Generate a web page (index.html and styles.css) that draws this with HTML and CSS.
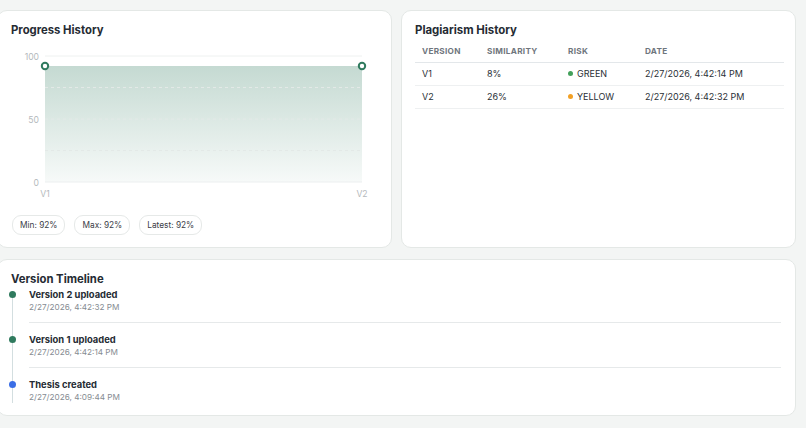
FILE: index.html
```html
<!DOCTYPE html>
<html lang="en">
<head>
<meta charset="utf-8">
<title>Thesis Dashboard</title>
<link rel="stylesheet" href="styles.css">
</head>
<body>
<div class="page">
  <div class="row">
    <section class="card progress">
      <h2 class="card-title">Progress History</h2>
      <svg class="chart" width="366" height="152" viewBox="-1 0 366 152">
        <defs>
          <linearGradient id="area" x1="0" y1="0" x2="0" y2="1">
            <stop offset="0" stop-color="#2f7a5e" stop-opacity="0.28"/>
            <stop offset="1" stop-color="#2f7a5e" stop-opacity="0.04"/>
          </linearGradient>
        </defs>
        <line x1="33" y1="7" x2="350" y2="7" stroke="#eef1f0" stroke-width="1"/>
        <path d="M33 17 L350 17 L350 133 L33 133 Z" fill="url(#area)"/>
        <line x1="33" y1="38.5" x2="350" y2="38.5" class="grid"/>
        <line x1="33" y1="70" x2="350" y2="70" class="grid"/>
        <line x1="33" y1="101.5" x2="350" y2="101.5" class="grid"/>
        <line x1="33" y1="133" x2="350" y2="133" stroke="#eceff0" stroke-width="1"/>
        <text x="27" y="10.5" class="axis" text-anchor="end">100</text>
        <text x="27" y="73.5" class="axis" text-anchor="end">50</text>
        <text x="27" y="136.5" class="axis" text-anchor="end">0</text>
        <text x="33" y="147.5" class="axis" text-anchor="middle">V1</text>
        <text x="350" y="147.5" class="axis" text-anchor="middle">V2</text>
        <circle cx="33" cy="17" r="3.2" fill="#fff" stroke="#2f7a5e" stroke-width="2"/>
        <circle cx="350" cy="17" r="3.2" fill="#fff" stroke="#2f7a5e" stroke-width="2"/>
      </svg>
      <div class="pills">
        <span class="pill">Min: 92%</span>
        <span class="pill">Max: 92%</span>
        <span class="pill">Latest: 92%</span>
      </div>
    </section>
    <section class="card plag">
      <h2 class="card-title">Plagiarism History</h2>
      <table class="ptable">
        <thead>
          <tr>
            <th class="c-ver">Version</th>
            <th class="c-sim">Similarity</th>
            <th class="c-risk">Risk</th>
            <th class="c-date">Date</th>
          </tr>
        </thead>
        <tbody>
          <tr>
            <td>V1</td>
            <td>8%</td>
            <td><span class="dot green"></span>GREEN</td>
            <td>2/27/2026, 4:42:14 PM</td>
          </tr>
          <tr>
            <td>V2</td>
            <td>26%</td>
            <td><span class="dot yellow"></span>YELLOW</td>
            <td>2/27/2026, 4:42:32 PM</td>
          </tr>
        </tbody>
      </table>
    </section>
  </div>
  <section class="card timeline-card">
    <h2 class="card-title">Version Timeline</h2>
    <ul class="timeline">
      <li class="tl-item">
        <span class="tl-dot green"></span>
        <div class="tl-body">
          <div class="tl-title">Version 2 uploaded</div>
          <div class="tl-date">2/27/2026, 4:42:32 PM</div>
        </div>
      </li>
      <li class="tl-item">
        <span class="tl-dot green"></span>
        <div class="tl-body">
          <div class="tl-title">Version 1 uploaded</div>
          <div class="tl-date">2/27/2026, 4:42:14 PM</div>
        </div>
      </li>
      <li class="tl-item">
        <span class="tl-dot blue"></span>
        <div class="tl-body last">
          <div class="tl-title">Thesis created</div>
          <div class="tl-date">2/27/2026, 4:09:44 PM</div>
        </div>
      </li>
    </ul>
  </section>
</div>
</body>
</html>
```

FILE: styles.css
```css
* { box-sizing: border-box; }

html, body {
  margin: 0;
  padding: 0;
  background: #f3f5f4;
  font-family: Inter, "Noto Sans", "Liberation Sans", sans-serif;
  color: #1f2933;
  overflow: hidden;
}

.page {
  width: 799px;
  margin-left: -3px;
  padding-top: 10px;
  display: flex;
  flex-direction: column;
  gap: 11px;
}

.row {
  display: grid;
  grid-template-columns: 395px 395px;
  gap: 9px;
}

.card {
  background: #fff;
  border: 1px solid #e4e8e6;
  border-radius: 10px;
  padding: 10px 14px 12px 13px;
}

.card-title {
  margin: 0;
  font-size: 11.3px;
  line-height: 18px;
  font-weight: 700;
  color: #252b33;
}

.plag .card-title { font-size: 11.4px; }

.progress { height: 238px; }

.chart {
  display: block;
  margin-top: 10px;
}

.grid {
  stroke: #e3e9e7;
  stroke-width: 1;
  stroke-dasharray: 3 3;
}

.axis {
  font-family: Inter, "Noto Sans", sans-serif;
  font-size: 8.6px;
  fill: #b4b9bc;
}

.pills {
  display: flex;
  gap: 9px;
  margin-top: 14px;
  margin-left: 1px;
}

.pill {
  display: inline-flex;
  align-items: center;
  height: 20px;
  padding: 0 7px;
  border: 1px solid #e6e9e8;
  border-radius: 9px;
  font-size: 8.3px;
  color: #3b4048;
}

.ptable {
  margin-top: 2px;
  width: 369px;
  border-collapse: collapse;
  font-size: 9px;
}

.ptable th {
  text-align: left;
  text-transform: uppercase;
  font-size: 8.2px;
  font-weight: 700;
  letter-spacing: 0.3px;
  color: #6f767d;
  padding: 0 7px;
  height: 21px;
  border-bottom: 1.5px solid #e3e7ea;
}

.c-ver { width: 65px; }
.c-sim { width: 81px; }
.c-risk { width: 77px; }

.ptable td {
  padding: 0 7px;
  height: 23px;
  color: #2a2f36;
  border-bottom: 1px solid #eef0f1;
  white-space: nowrap;
}

.dot {
  display: inline-block;
  width: 5px;
  height: 5px;
  border-radius: 50%;
  margin-right: 4px;
  vertical-align: 1px;
}
.dot.green { background: #43a05a; }
.dot.yellow { background: #f2a024; }

.timeline {
  list-style: none;
  margin: 0;
  padding: 0;
  position: relative;
}

.timeline::before {
  content: "";
  position: absolute;
  left: 1px;
  top: 6px;
  bottom: 0;
  width: 1px;
  background: #d3dee0;
}

.tl-item {
  display: flex;
  align-items: flex-start;
}

.tl-dot {
  flex: none;
  width: 7px;
  height: 7px;
  border-radius: 50%;
  margin-left: -2px;
  margin-top: 3px;
  position: relative;
}
.tl-dot.green { background: #2f7a5e; }
.tl-dot.blue { background: #3a6ee6; }

.tl-body {
  flex: 1;
  margin-left: 13px;
  padding-bottom: 9px;
  margin-bottom: 10px;
  border-bottom: 1px solid #e6e9ea;
}
.tl-body.last {
  border-bottom: none;
  padding-bottom: 0;
  margin-bottom: 0;
}

.tl-title {
  font-size: 9.4px;
  line-height: 13px;
  font-weight: 700;
  color: #252b33;
}

.tl-date {
  font-size: 8.2px;
  line-height: 12px;
  color: #868c92;
}
```
